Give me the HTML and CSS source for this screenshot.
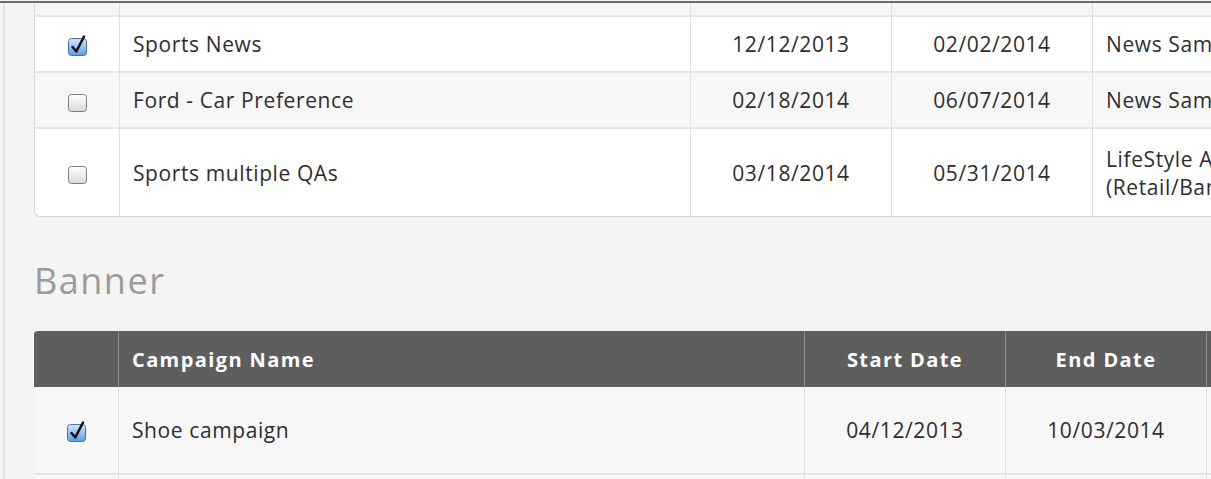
FILE: index.html
```html
<!DOCTYPE html>
<html lang="en">

<head>
    <meta charset="UTF-8">
    <meta name="viewport" content="width=device-width, initial-scale=1.0">
    <title>Campaigns</title>
    <link rel="stylesheet" href="styles.css">
</head>

<body>
    <div class="screen">
        <div class="panel">

            <!-- Previous section (scrolled) -->
            <div class="card card-bottom">
                <table class="grid">
                    <colgroup>
                        <col class="c-check">
                        <col style="width: 571px">
                        <col class="c-date">
                        <col class="c-date">
                        <col style="width: 260px">
                    </colgroup>
                    <tr class="cut">
                        <td></td><td></td><td></td><td></td><td></td>
                    </tr>
                    <tr>
                        <td class="check">
                            <svg class="box" width="21" height="23" viewBox="0 0 21 23">
                                <defs>
                                    <linearGradient id="blue1" x1="0" y1="0" x2="0" y2="1">
                                        <stop offset="0" stop-color="#d6e6fb" />
                                        <stop offset="1" stop-color="#5d9be8" />
                                    </linearGradient>
                                </defs>
                                <rect x="1.5" y="4.5" width="18" height="17" rx="3" fill="url(#blue1)" stroke="#4d6f9e" />
                                <path d="M5.5 13 L9.3 17.5 L17 2.5" fill="none" stroke="#111" stroke-width="2.5" stroke-linecap="round" stroke-linejoin="round" />
                            </svg>
                        </td>
                        <td>Sports News</td>
                        <td class="date">12/12/2013</td>
                        <td class="date">02/02/2014</td>
                        <td>News Sample</td>
                    </tr>
                    <tr class="alt">
                        <td class="check">
                            <svg class="box" width="21" height="23" viewBox="0 0 21 23">
                                <defs>
                                    <linearGradient id="grey1" x1="0" y1="0" x2="0" y2="1">
                                        <stop offset="0" stop-color="#ffffff" />
                                        <stop offset="1" stop-color="#d9d9d9" />
                                    </linearGradient>
                                </defs>
                                <rect x="1.5" y="4.5" width="18" height="17" rx="3" fill="url(#grey1)" stroke="#7d7d7d" />
                            </svg>
                        </td>
                        <td>Ford - Car Preference</td>
                        <td class="date">02/18/2014</td>
                        <td class="date">06/07/2014</td>
                        <td>News Sample</td>
                    </tr>
                    <tr class="tall last">
                        <td class="check">
                            <svg class="box" width="21" height="23" viewBox="0 0 21 23">
                                <rect x="1.5" y="4.5" width="18" height="17" rx="3" fill="url(#grey1)" stroke="#7d7d7d" />
                            </svg>
                        </td>
                        <td>Sports multiple QAs</td>
                        <td class="date">03/18/2014</td>
                        <td class="date">05/31/2014</td>
                        <td class="wrap">LifeStyle Apparel (Retail/Banking)</td>
                    </tr>
                </table>
            </div>

            <h2 class="section-title">Banner</h2>

            <div class="card card-top">
                <table class="grid banner">
                    <colgroup>
                        <col class="c-check">
                        <col style="width: 686px">
                        <col class="c-date">
                        <col class="c-date">
                        <col style="width: 220px">
                    </colgroup>
                    <thead>
                        <tr>
                            <th></th>
                            <th class="left">Campaign Name</th>
                            <th>Start Date</th>
                            <th>End Date</th>
                            <th>Category</th>
                        </tr>
                    </thead>
                    <tbody>
                        <tr class="alt tall">
                            <td class="check">
                                <svg class="box" width="21" height="23" viewBox="0 0 21 23">
                                    <rect x="1.5" y="4.5" width="18" height="17" rx="3" fill="url(#blue1)" stroke="#4d6f9e" />
                                    <path d="M5.5 13 L9.3 17.5 L17 2.5" fill="none" stroke="#111" stroke-width="2.5" stroke-linecap="round" stroke-linejoin="round" />
                                </svg>
                            </td>
                            <td>Shoe campaign</td>
                            <td class="date">04/12/2013</td>
                            <td class="date">10/03/2014</td>
                            <td>News Sample</td>
                        </tr>
                        <tr class="tall">
                            <td class="check"></td>
                            <td></td>
                            <td></td>
                            <td></td>
                            <td></td>
                        </tr>
                    </tbody>
                </table>
            </div>

        </div>
    </div>
</body>

</html>
```

FILE: styles.css
```css
html,
body {
    margin: 0;
    height: 100%;
    overflow: hidden;
    background-color: #f4f4f4;
}

body {
    font-family: "Open Sans", "Liberation Sans", sans-serif;
    color: #2e2e2e;
}

.screen {
    margin-top: 1px;
    border-top: 2px solid #6c6c6c;
    height: 100%;
}

.panel {
    margin-left: 3px;
    border-left: 2px solid #e2e2e2;
    padding-left: 29px;
    height: 100%;
    width: 1400px;
}

/* table card */
.card {
    display: block;
    width: max-content;
    border: 1px solid #d9d9d9;
    border-right: none;
    background-color: #fff;
    overflow: hidden;
}

.card-bottom {
    border-top: none;
    border-radius: 0 0 0 6px;
}

.card-top {
    border: none;
    border-radius: 4px 0 0 0;
    background-color: #f7f7f7;
}

.grid {
    border-collapse: separate;
    border-spacing: 0;
    table-layout: fixed;
    font-size: 21px;
    letter-spacing: 0.6px;
}

.c-check {
    width: 85px;
}

.c-date {
    width: 201px;
}

.grid td {
    padding: 0 13px;
    border-right: 1px solid #e0e0e0;
    border-bottom: 2px solid #e6e6e6;
    vertical-align: middle;
    white-space: nowrap;
}

.grid tr {
    height: 56px;
}

.grid tr.cut {
    height: 14px;
}

.grid tr.cut td {
    background-color: #f6f6f6;
}

.grid tr.alt td {
    background-color: #f7f7f7;
}

.grid tr.tall {
    height: 87px;
}

.grid tr.last td {
    border-bottom: none;
}

.grid td.check {
    padding: 0;
    text-align: center;
}

.box {
    display: block;
    margin: 2px auto 0 auto;
}

.grid td.date {
    text-align: center;
}

.grid td.wrap {
    white-space: normal;
    line-height: 28px;
}

/* section heading */
.section-title {
    margin: 44px 0 30px 0;
    font-size: 36px;
    font-weight: 400;
    line-height: 40px;
    letter-spacing: 1.5px;
    color: #9b9b9b;
}

/* banner header */
.banner thead tr {
    height: 56px;
}

.banner th {
    background-color: #5e5e5e;
    color: #fff;
    font-size: 20px;
    font-weight: 700;
    letter-spacing: 1.4px;
    text-align: center;
    padding: 0 13px;
    border-right: 1px solid #8c8c8c;
    white-space: nowrap;
}

.banner th.left {
    text-align: left;
}

.banner tr.tall {
    height: 88px;
}
```
